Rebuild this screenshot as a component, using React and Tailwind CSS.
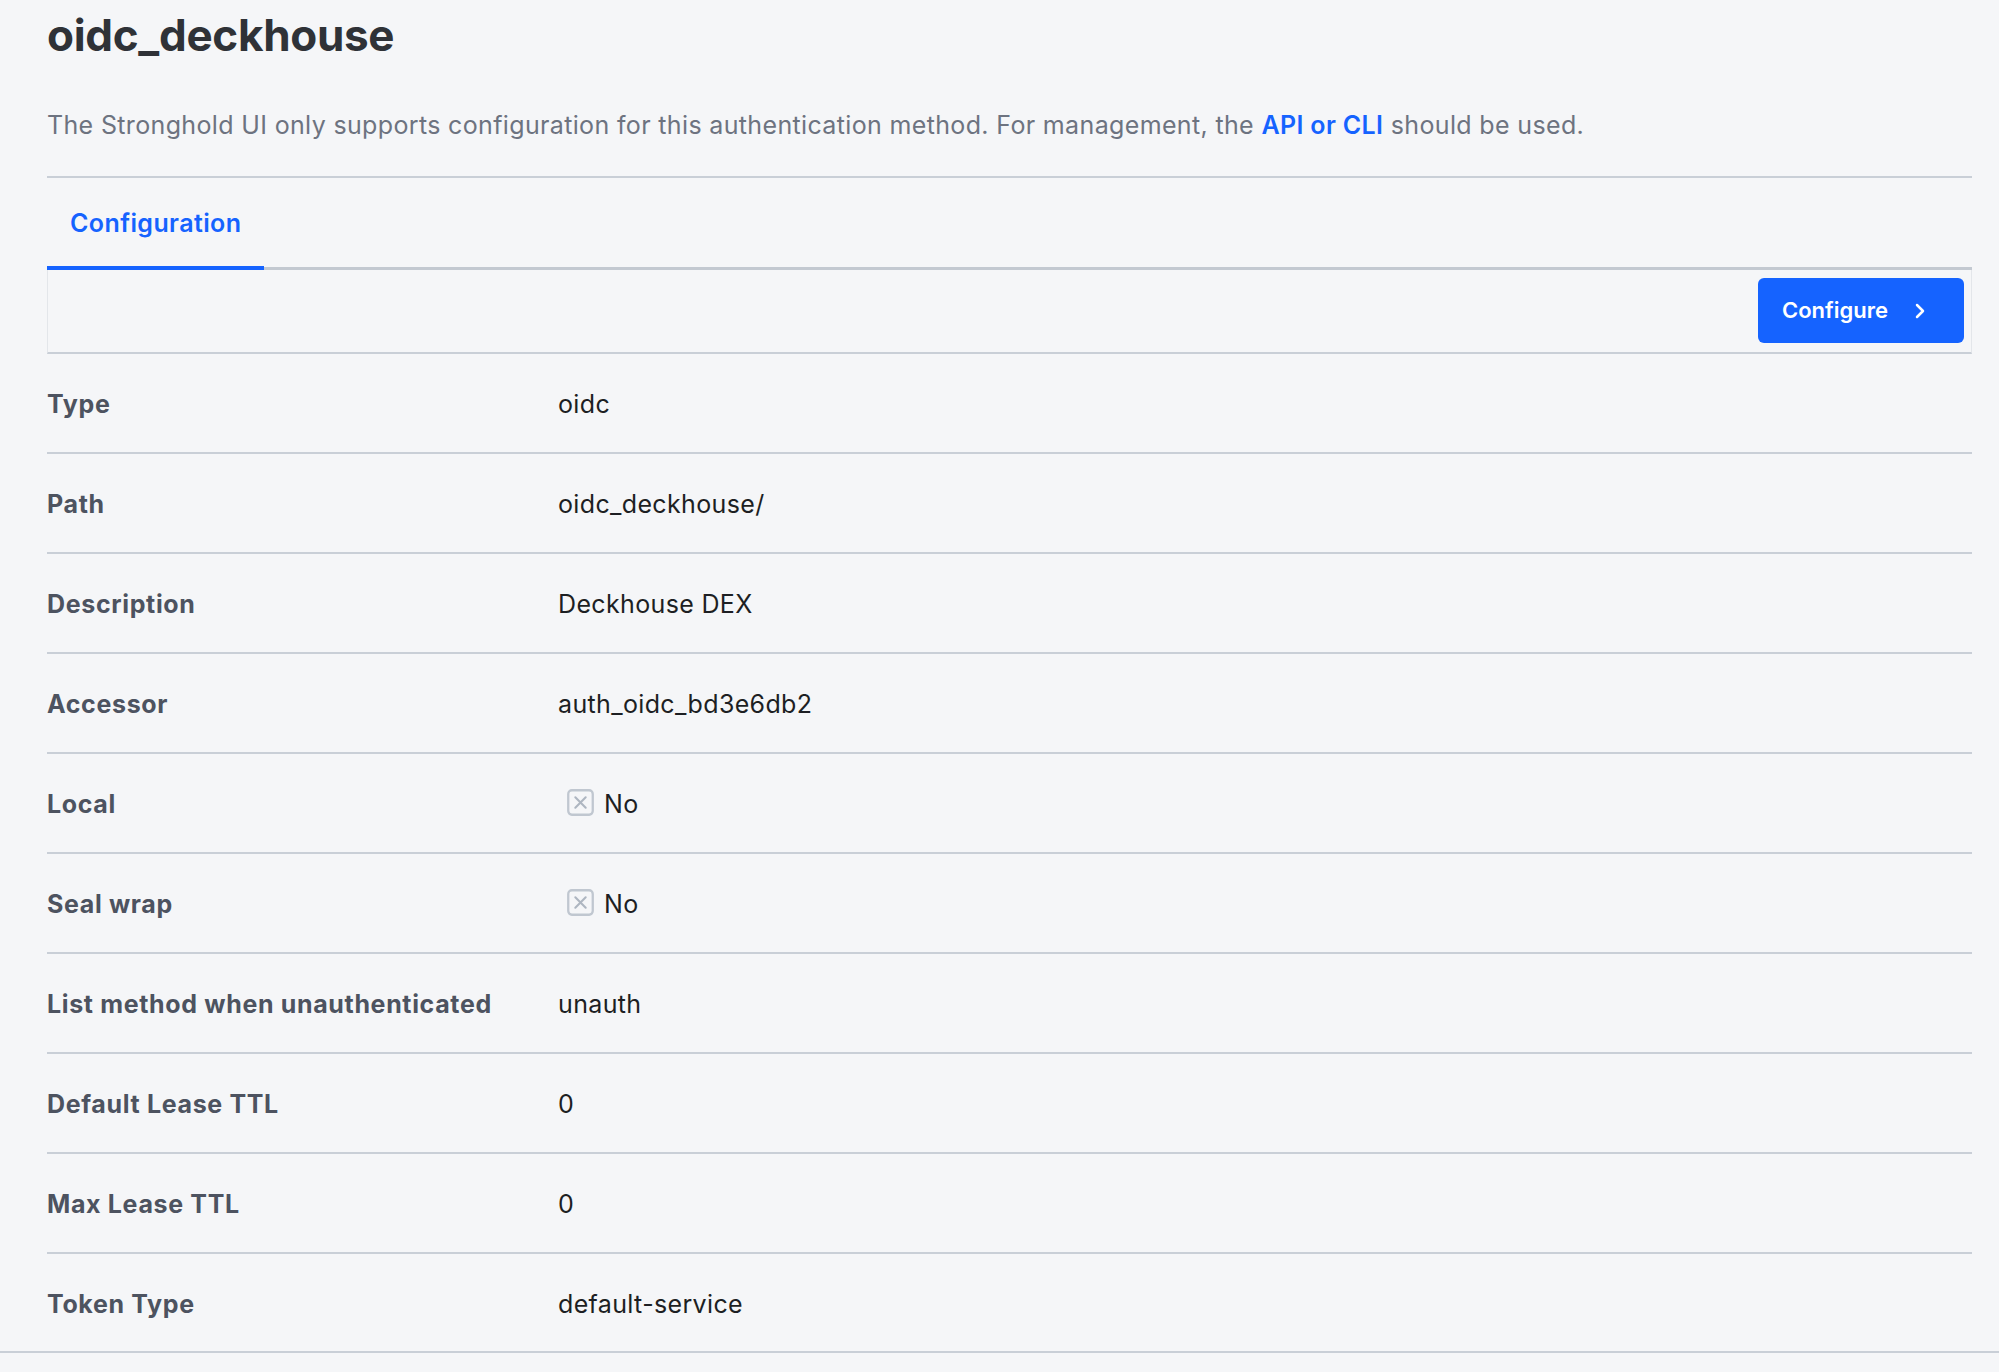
import { ChevronRight } from "lucide-react";

const rows = [
  { label: "Type", value: "oidc" },
  { label: "Path", value: "oidc_deckhouse/" },
  { label: "Description", value: "Deckhouse DEX" },
  { label: "Accessor", value: "auth_oidc_bd3e6db2" },
  { label: "Local", value: "No", flag: true },
  { label: "Seal wrap", value: "No", flag: true },
  { label: "List method when unauthenticated", value: "unauth" },
  { label: "Default Lease TTL", value: "0" },
  { label: "Max Lease TTL", value: "0" },
  { label: "Token Type", value: "default-service" },
];

function CrossBox() {
  return (
    <svg width="27" height="27" viewBox="0 0 26 26" fill="none" className="ml-[9px] mr-[10px] -mt-[6px]">
      <rect x="1.2" y="1.2" width="23.6" height="23.6" rx="3.5" stroke="#c0c7d0" strokeWidth="2.2" />
      <path d="M8 8l10 10M18 8L8 18" stroke="#aeb6c1" strokeWidth="2" strokeLinecap="round" />
    </svg>
  );
}

function Row({ label, value, flag, last }) {
  return (
    <div
      className={
        last
          ? "flex items-center h-[97px] pt-[4px]"
          : "flex items-center h-[100px] pt-[4px] border-b-2 border-[#c9cfd7]"
      }
    >
      <div className="w-[511px] text-[25px] font-bold tracking-[0.65px] text-[#4d5360]">{label}</div>
      <div className="flex items-center text-[25px] tracking-[0.35px] text-[#1d1f23]">
        {flag && <CrossBox />}
        {value}
      </div>
    </div>
  );
}

export default function App() {
  return (
    <div className="min-h-screen bg-[#f5f6f8] font-['Inter','Noto_Sans',sans-serif]">
      <div className="pl-[47px] pr-[27px]">
        <h1 className="pt-[8px] text-[44px] leading-[55px] font-bold text-[#2f3237] tracking-[-0.3px]">
          oidc_deckhouse
        </h1>
        <p className="mt-[44px] pb-[33px] border-b-2 border-[#c9cfd7] text-[25px] leading-[36px] tracking-[0.35px] text-[#6d7380]">
          The Stronghold UI only supports configuration for this authentication method. For management, the{" "}
          <a href="#" className="font-semibold text-[#1563ff]">
            API or CLI
          </a>{" "}
          should be used.
        </p>

        <div className="flex border-b-[3px] border-[#c3c9d1]">
          <div className="-mb-[3px] flex h-[92px] items-center border-b-4 border-[#1563ff] px-[23px] pt-[4px] text-[25px] font-semibold tracking-[0.4px] text-[#1563ff]">
            Configuration
          </div>
        </div>

        <div className="flex justify-end border-x border-b-2 border-x-[#e3e6ea] border-b-[#c9cfd7] pt-[8px] pb-[9px] pr-[7px]">
          <button className="flex h-[65px] w-[206px] items-center rounded-[6px] bg-[#1563ff] pl-[24px] text-[22px] font-semibold text-white">
            Configure
            <ChevronRight size={24} strokeWidth={2.5} className="ml-[20px]" />
          </button>
        </div>

        {rows.map((r, i) => (
          <Row key={r.label} {...r} last={i === rows.length - 1} />
        ))}
      </div>
      <div className="border-t-2 border-[#c9cfd7]" />
    </div>
  );
}
